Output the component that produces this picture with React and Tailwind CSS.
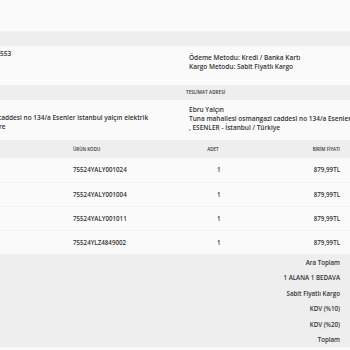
import React from 'react';

const rows = [
  { code: '75524YALY001024', qty: 1, price: '879,99TL' },
  { code: '75524YALY001004', qty: 1, price: '879,99TL' },
  { code: '75524YALY001011', qty: 1, price: '879,99TL' },
  { code: '75524YLZ4849002', qty: 1, price: '879,99TL' },
];

const totals = ['Ara Toplam', '1 ALANA 1 BEDAVA', 'Sabit Fiyatlı Kargo', 'KDV (%10)', 'KDV (%20)', 'Toplam'];

export default function App() {
  return (
    <div
      className="w-[350px] h-[350px] overflow-hidden bg-[#fafafa] text-[#333333] font-semibold"
      style={{ fontFamily: '"Open Sans", "Liberation Sans", sans-serif' }}
    >
      {/* top spacer */}
      <div className="h-[32px] bg-[#fafafa] border-b border-[#f3f3f3]" />

      {/* order / payment block */}
      <div className="h-[14px] bg-[#eeeeee]" />
      <div className="flex h-[34px] bg-[#fafafa]">
        <div className="w-[185px] pt-[3px] text-[6.5px] leading-[9px]">553</div>
        <div className="flex-1 pl-[4px] pt-[7px] text-[6.5px] leading-[9px] whitespace-nowrap">
          <div>Ödeme Metodu: Kredi / Banka Kartı</div>
          <div>Kargo Metodu: Sabit Fiyatlı Kargo</div>
        </div>
      </div>
      <div className="h-[5px] border-t border-[#ffffff]" />

      {/* address block */}
      <div className="flex h-[15px] bg-[#eeeeee] items-center">
        <div className="w-[185px]" />
        <div className="pl-[1px] text-[4.5px] uppercase tracking-[0.1px]">TESLİMAT ADRESİ</div>
      </div>
      <div className="flex h-[37px] overflow-hidden whitespace-nowrap text-[6.5px] leading-[9px]">
        <div className="w-[185px] pt-[13px] overflow-hidden">
          <div className="-ml-[2px]">caddesi no 134/a Esenler istanbul yalçın elektrik</div>
          <div className="-ml-[1px]">re</div>
        </div>
        <div className="flex-1 pl-[4px] pt-[5px] overflow-hidden">
          <div>Ebru Yalçın</div>
          <div>Tuna mahallesi osmangazi caddesi no 134/a Esenler istanbul</div>
          <div>, ESENLER - İstanbul / Türkiye</div>
        </div>
      </div>
      <div className="h-[3px]" />

      {/* products table */}
      <div className="grid grid-cols-[183px_60px_1fr] h-[18px] bg-[#eeeeee] items-center text-[4.5px] uppercase">
        <div className="pl-[73px]">ÜRÜN KODU</div>
        <div className="text-center">ADET</div>
        <div className="text-right pr-[10px]">BİRİM FİYATI</div>
      </div>
      {rows.map((r, i) => (
        <div
          key={r.code}
          className={`grid grid-cols-[183px_60px_1fr] h-[24px] items-center text-[6.2px] ${i > 0 ? 'border-t border-[#f1f1f1]' : ''}`}
        >
          <div className="pl-[73px]">{r.code}</div>
          <div className="pl-[34px]">{r.qty}</div>
          <div className="text-right pr-[10px]">{r.price}</div>
        </div>
      ))}

      {/* totals */}
      <div className="h-[93px] bg-[#eeeeee] pt-[1px] pr-[10px] flex flex-col items-end text-[6.2px] leading-[15.4px]">
        {totals.map((t) => (
          <div key={t}>{t}</div>
        ))}
      </div>
    </div>
  );
}
